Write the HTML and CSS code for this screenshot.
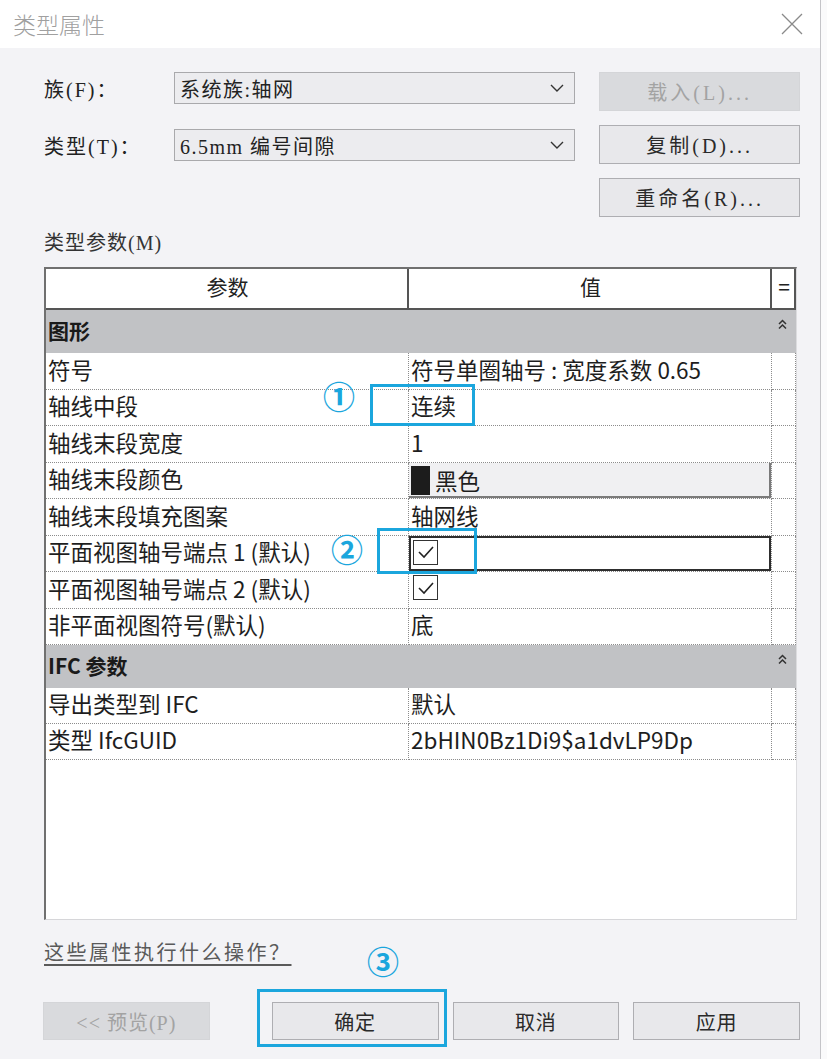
FILE: index.html
```html
<!DOCTYPE html>
<html lang="zh-CN">
<head>
  <meta charset="UTF-8" />
  <meta name="viewport" content="width=device-width, initial-scale=1.0" />
  <title>类型属性</title>
  <link rel="stylesheet" href="styles.css">
</head>
<body>
  <div class="dialog">
    <div class="titlebar">
      <span class="title">类型属性</span>
      <svg class="close" width="22" height="22" viewBox="0 0 22 22">
        <path d="M1 1 L21 21 M21 1 L1 21" stroke="#8a8a8a" stroke-width="1.3" fill="none" />
      </svg>
    </div>

    <div class="content">
      <div class="top">
        <div class="fields">
          <div class="field">
            <label>族(F)：</label>
            <div class="select">
              <span>系统族:轴网</span>
              <svg width="14" height="9" viewBox="0 0 14 9"><path d="M1 1 L7 7 L13 1" stroke="#333" stroke-width="1.4" fill="none" /></svg>
            </div>
          </div>
          <div class="field">
            <label>类型(T)：</label>
            <div class="select">
              <span>6.5mm 编号间隙</span>
              <svg width="14" height="9" viewBox="0 0 14 9"><path d="M1 1 L7 7 L13 1" stroke="#333" stroke-width="1.4" fill="none" /></svg>
            </div>
          </div>
        </div>
        <div class="side">
          <button class="btn" disabled>载入(L)...</button>
          <button class="btn">复制(D)...</button>
          <button class="btn">重命名(R)...</button>
        </div>
      </div>

      <div class="section-label">类型参数(M)</div>

      <div class="grid">
        <div class="row head">
          <div class="cell">参数</div>
          <div class="cell">值</div>
          <div class="cell">=</div>
        </div>

        <div class="group">
          <span>图形</span>
          <svg width="9" height="11" viewBox="0 0 9 11"><path d="M1 5 L4.5 1.5 L8 5 M1 9.5 L4.5 6 L8 9.5" stroke="#333" stroke-width="1.5" fill="none" /></svg>
        </div>
        <div class="row">
          <div class="cell">符号</div>
          <div class="cell">符号单圈轴号 : 宽度系数 0.65</div>
          <div class="cell"></div>
        </div>
        <div class="row">
          <div class="cell">轴线中段</div>
          <div class="cell">连续</div>
          <div class="cell"></div>
        </div>
        <div class="row">
          <div class="cell">轴线末段宽度</div>
          <div class="cell">1</div>
          <div class="cell"></div>
        </div>
        <div class="row">
          <div class="cell">轴线末段颜色</div>
          <div class="cell color-cell"><span class="swatch"></span>黑色</div>
          <div class="cell"></div>
        </div>
        <div class="row">
          <div class="cell">轴线末段填充图案</div>
          <div class="cell">轴网线</div>
          <div class="cell"></div>
        </div>
        <div class="row">
          <div class="cell">平面视图轴号端点 1 (默认)</div>
          <div class="cell focused"><span class="check"><svg width="18" height="14" viewBox="0 0 18 14"><path d="M2 7 L7 12 L16 2" stroke="#222" stroke-width="1.6" fill="none" /></svg></span></div>
          <div class="cell"></div>
        </div>
        <div class="row">
          <div class="cell">平面视图轴号端点 2 (默认)</div>
          <div class="cell"><span class="check"><svg width="18" height="14" viewBox="0 0 18 14"><path d="M2 7 L7 12 L16 2" stroke="#222" stroke-width="1.6" fill="none" /></svg></span></div>
          <div class="cell"></div>
        </div>
        <div class="row">
          <div class="cell">非平面视图符号(默认)</div>
          <div class="cell">底</div>
          <div class="cell"></div>
        </div>

        <div class="group">
          <span>IFC 参数</span>
          <svg width="9" height="11" viewBox="0 0 9 11"><path d="M1 5 L4.5 1.5 L8 5 M1 9.5 L4.5 6 L8 9.5" stroke="#333" stroke-width="1.5" fill="none" /></svg>
        </div>
        <div class="row short">
          <div class="cell">导出类型到 IFC</div>
          <div class="cell">默认</div>
          <div class="cell"></div>
        </div>
        <div class="row short">
          <div class="cell">类型 IfcGUID</div>
          <div class="cell">2bHIN0Bz1Di9$a1dvLP9Dp</div>
          <div class="cell"></div>
        </div>
      </div>

      <div class="help-line"><a href="#" class="help">这些属性执行什么操作？</a></div>

      <div class="actions">
        <button class="btn wide" disabled>&lt;&lt; 预览(P)</button>
        <button class="btn wide">确定</button>
        <button class="btn wide">取消</button>
        <button class="btn wide">应用</button>
      </div>
    </div>

    <!-- annotation marks -->
    <span class="num num1">①</span>
    <div class="mark mark1"></div>
    <span class="num num2">②</span>
    <div class="mark mark2"></div>
    <span class="num num3">③</span>
    <div class="mark mark3"></div>
  </div>
</body>
</html>
```

FILE: styles.css
```css
* {
  box-sizing: border-box;
}

body {
  margin: 0;
  background: #fafafb;
  font-family: "Liberation Serif", "Noto Sans CJK SC", serif;
}

.dialog {
  position: relative;
  width: 821px;
  height: 1059px;
  background: #f3f3f6;
  border-right: 1px solid #c4c4c8;
  overflow: hidden;
}

.titlebar {
  height: 48px;
  background: #fff;
  display: flex;
  align-items: center;
  justify-content: space-between;
  padding: 0 17px 0 13px;
}

.title {
  font-family: "Noto Sans CJK SC", sans-serif;
  font-weight: 300;
  font-size: 23px;
  color: #a0a0a0;
}

.content {
  padding: 24px 20px 0 44px;
}

.top {
  display: flex;
  gap: 24px;
}

.fields {
  width: 532px;
  display: flex;
  flex-direction: column;
  gap: 25px;
}

.field {
  display: flex;
  align-items: center;
  height: 32px;
}

.field label {
  width: 130px;
  font-size: 20px;
  letter-spacing: 2px;
  color: #222;
}

.select {
  flex: 1;
  height: 32px;
  border: 1px solid #a9a9ac;
  background: #ececef;
  display: flex;
  align-items: center;
  justify-content: space-between;
  padding: 0 10px 0 5px;
  font-size: 20px;
  letter-spacing: 1.5px;
  color: #222;
}

.side {
  width: 201px;
  display: flex;
  flex-direction: column;
  gap: 14px;
}

.btn {
  height: 39px;
  font-family: "Liberation Serif", "Noto Sans CJK SC", serif;
  font-size: 20px;
  background: #e8e8eb;
  border: 1px solid #aeaeb2;
  color: #2a2a2a;
  letter-spacing: 3px;
  padding: 0;
}

.btn:disabled {
  background: #d9dadd;
  border-color: #d4d5d8;
  color: #a3a3a3;
}

.section-label {
  margin-top: 14px;
  line-height: 24px;
  font-size: 20px;
  letter-spacing: 1px;
  color: #333;
}

.grid {
  margin-top: 12px;
  width: 753px;
  height: 653px;
  background: #fff;
  border-left: 2px solid #707070;
  border-top: 2px solid #707070;
  border-right: 1px solid #dcdcdf;
  border-bottom: 1px solid #d6d6d9;
  font-family: "Noto Sans CJK SC", sans-serif;
  font-size: 22.5px;
  color: #1e1e1e;
}

.row {
  display: grid;
  grid-template-columns: 363px 363px 24px;
  height: 36.5px;
}

.row.short {
  height: 36px;
}

.cell {
  border-right: 1px dotted #8c8c8c;
  border-bottom: 1px dotted #8c8c8c;
  padding: 0 0 4px 2px;
  display: flex;
  align-items: center;
  white-space: nowrap;
  overflow: hidden;
  line-height: 1;
}

.head {
  height: 41px;
  border-bottom: 2px solid #555;
}

.head .cell {
  border-right: 2px solid #555;
  border-bottom: none;
  justify-content: center;
  font-size: 21px;
  color: #222;
}

.group {
  height: 43px;
  background: #c1c2c5;
  display: flex;
  align-items: center;
  justify-content: space-between;
  padding: 0 9px 4px 2px;
  font-weight: bold;
  font-size: 21px;
  color: #1a1a1a;
}

.group svg {
  margin-top: -10px;
}

.color-cell {
  background: #f0f0f2;
  box-shadow: inset -2px -2px 0 #7a7a7a;
  padding-bottom: 0;
}

.swatch {
  width: 19px;
  height: 29px;
  background: #1c1c1c;
  margin-right: 5px;
}

.focused {
  box-shadow: inset 0 0 0 2px #2e2e2e;
  padding-left: 4px;
  padding-bottom: 2px;
}

.check {
  width: 25px;
  height: 25px;
  border: 1.5px solid #333;
  display: flex;
  align-items: center;
  justify-content: center;
  margin-left: 2px;
}

.focused .check {
  margin-left: 0;
}

.help-line {
  margin-top: 21px;
  line-height: 24px;
}

.help {
  font-size: 20px;
  letter-spacing: 2.5px;
  color: #5a5a5a;
  text-decoration: underline;
  text-underline-offset: 4px;
}

.actions {
  margin-top: 35px;
  margin-left: -1px;
  display: flex;
  gap: 14px;
}

.btn.wide {
  width: 167px;
  height: 38px;
  letter-spacing: 1px;
}

.actions .btn:first-child {
  margin-right: 48px;
}

/* annotation marks */
.mark {
  position: absolute;
  border: 3px solid #1ba6dd;
}

.mark1 {
  left: 370px;
  top: 384px;
  width: 105px;
  height: 42px;
}

.mark2 {
  left: 377px;
  top: 528px;
  width: 100px;
  height: 46px;
}

.mark3 {
  left: 257px;
  top: 989px;
  width: 190px;
  height: 58px;
}

.num {
  position: absolute;
  font-family: "Noto Sans CJK SC", sans-serif;
  font-weight: bold;
  font-size: 32px;
  line-height: 1;
  color: #1ba6dd;
}

.num1 {
  left: 323px;
  top: 379px;
}

.num2 {
  left: 331px;
  top: 532px;
}

.num3 {
  left: 367px;
  top: 944px;
}
```
